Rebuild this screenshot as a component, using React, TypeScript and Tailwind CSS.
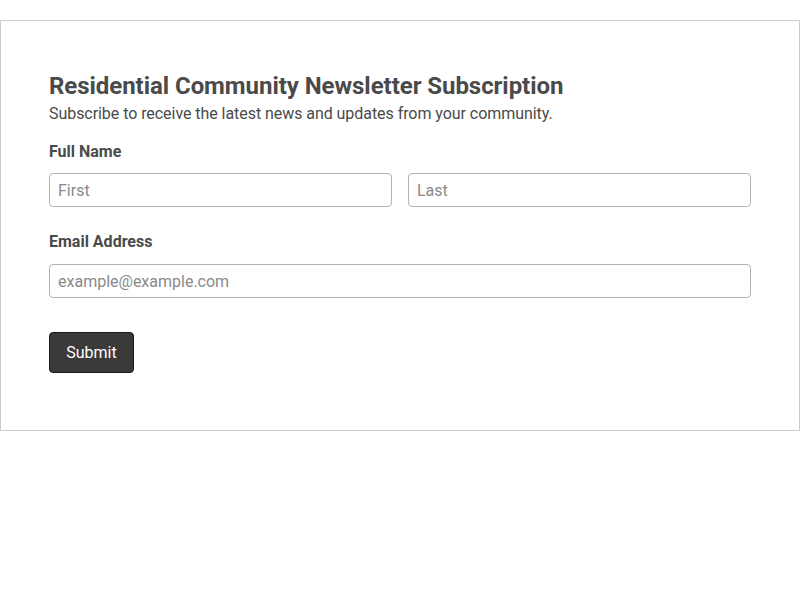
export default function App() {
  return (
    <div className="min-h-[600px] bg-white pt-5" style={{ fontFamily: "Roboto, 'Liberation Sans', sans-serif" }}>
      <div className="border border-[#cccccc] px-12 pt-[50px] pb-[57px]">
        <h1 className="text-2xl leading-[31px] font-bold text-[#4a4a4a] tracking-[-0.05px]">Residential Community Newsletter Subscription</h1>
        <p className="text-base leading-6 text-[#4a4a4a] tracking-[-0.055px]">Subscribe to receive the latest news and updates from your community.</p>
        <form className="mt-[14px]">
          <label className="block text-base leading-6 font-bold text-[#4a4a4a]">Full Name</label>
          <div className="mt-[9px] flex gap-4">
            <input placeholder="First" className="h-[34px] flex-1 min-w-0 rounded border border-[#b3b3b3] px-2 text-base text-[#4a4a4a] placeholder:text-[#8a8a8a] outline-none" />
            <input placeholder="Last" className="h-[34px] flex-1 min-w-0 rounded border border-[#b3b3b3] px-2 text-base text-[#4a4a4a] placeholder:text-[#8a8a8a] outline-none" />
          </div>
          <label className="mt-[23px] block text-base leading-6 font-bold text-[#4a4a4a]">Email Address</label>
          <input placeholder="example@example.com" className="mt-[10px] block h-[34px] w-full rounded border border-[#b3b3b3] px-2 text-base text-[#4a4a4a] placeholder:text-[#8a8a8a] outline-none" />
          <button type="button" className="mt-[34px] h-[41px] w-[85px] rounded border border-[#1a1a1a] bg-[#3a3a3a] text-base text-white">Submit</button>
        </form>
      </div>
    </div>
  );
}
